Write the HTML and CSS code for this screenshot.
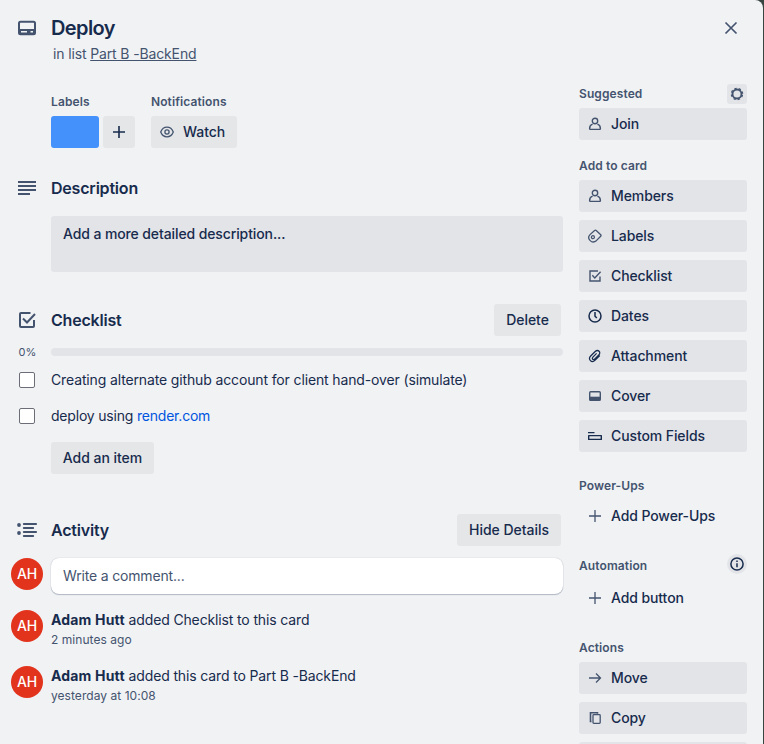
FILE: index.html
```
<!DOCTYPE html>
<html lang="en">
<head>
<meta charset="utf-8">
<title>Deploy</title>
<link rel="stylesheet" href="styles.css">
</head>
<body>
<svg class="sprite" aria-hidden="true">
  <symbol id="person" viewBox="0 0 16 16"><g fill="none" stroke="currentColor" stroke-width="1.4"><circle cx="8" cy="5" r="2.7"/><path d="M5.600 8.200C3.600 8.800 2.600 10.500 2.600 12.700c0 .5.200.7.700.7h9.400c.5 0 .7-.2.700-.7 0-2.200-1-3.900-3-4.500"/></g></symbol>
  <symbol id="plus" viewBox="0 0 16 16"><path d="M8 2v12M2 8h12" fill="none" stroke="currentColor" stroke-width="1.300"/></symbol>
  <symbol id="check" viewBox="0 0 16 16"><path d="M11 3H3v10h10V8.500M5.300 7.300l2.500 2.700 5.800-6.200" fill="none" stroke="currentColor" stroke-width="1.400"/></symbol>
</svg>
<div class="card">
  <button class="close" aria-label="Close"><svg width="14" height="14" viewBox="0 0 14 14"><path d="M1.500 1.500l11 11M12.500 1.500l-11 11" fill="none" stroke="currentColor" stroke-width="1.700"/></svg></button>
  <main class="main">
    <header class="row head">
      <div class="gutter"><svg width="20" height="16" viewBox="0 0 20 16"><rect x="2" y="1.800" width="16" height="12.400" rx="1.500" fill="none" stroke="currentColor" stroke-width="2"/><path d="M2 9h16v5H2z" fill="currentColor"/><path d="M4 11.700h6M13.500 11.700h2.500" stroke="#f1f2f4" stroke-width="1.400"/></svg></div>
      <h1>Deploy</h1>
    </header>
    <p class="sub">in list <a>Part B -BackEnd</a></p>

    <section class="details">
      <div><h3>Labels</h3><div class="chips"><span class="label"></span><button class="btn square"><svg width="14" height="14" viewBox="0 0 14 14"><path d="M7 1v12M1 7h12" stroke="currentColor" stroke-width="1.600"/></svg></button></div></div>
      <div><h3>Notifications</h3><button class="btn watch"><svg width="16" height="16" viewBox="0 0 16 16"><g fill="none" stroke="currentColor" stroke-width="1.300"><path d="M1.700 8C3 4.800 5.200 3.200 8 3.200S13 4.800 14.300 8C13 11.200 10.800 12.800 8 12.800S3 11.200 1.700 8z"/><circle cx="8" cy="8" r="2.100"/></g></svg><span>Watch</span></button></div>
    </section>

    <section class="row title-row description">
      <div class="gutter"><svg width="18" height="14" viewBox="0 0 18 14"><path d="M0 1h18M0 5h18M0 9h18M0 13h12" stroke="currentColor" stroke-width="2"/></svg></div>
      <h2>Description</h2>
    </section>
    <div class="desc-box">Add a more detailed description...</div>

    <section class="row title-row checklist">
      <div class="gutter"><svg width="18" height="18" viewBox="0 0 18 18"><path d="M12.500 2H3a1 1 0 0 0-1 1v12a1 1 0 0 0 1 1h12a1 1 0 0 0 1-1V9M5 7.500l4 4 8-8.500" fill="none" stroke="currentColor" stroke-width="2"/></svg></div>
      <h2>Checklist</h2><button class="btn delete">Delete</button>
    </section>
    <div class="row progress"><div class="gutter">0%</div><div class="track"></div></div>
    <div class="row item"><div class="gutter"><span class="box"></span></div><span>Creating alternate github account for client hand-over (simulate)</span></div>
    <div class="row item"><div class="gutter"><span class="box"></span></div><span class="tight">deploy using <a class="link">render.com</a></span></div>
    <button class="btn add-item">Add an item</button>

    <section class="row title-row activity">
      <div class="gutter"><svg width="20" height="16" viewBox="0 0 20 16"><g stroke="currentColor" stroke-width="1.900" stroke-linecap="round"><path d="M6.800 2h12.400M6.800 6h9.400M6.800 10h12.400M6.800 14h9.400"/></g><circle cx="2" cy="3" r="1.900" fill="currentColor"/><circle cx="2" cy="11" r="1.900" fill="currentColor"/></svg></div>
      <h2>Activity</h2><button class="btn hide">Hide Details</button>
    </section>
    <div class="row comment"><div class="avatar">AH</div><div class="input">Write a comment...</div></div>
    <div class="row entry first"><div class="avatar">AH</div><div><p><b>Adam Hutt</b> added Checklist to this card</p><p class="time">2 minutes ago</p></div></div>
    <div class="row entry"><div class="avatar">AH</div><div><p><b>Adam Hutt</b> added this card to Part B -BackEnd</p><p class="time">yesterday at 10:08</p></div></div>
  </main>

  <aside class="side">
    <div class="side-head suggested"><h3>Suggested</h3><button class="gear"><svg width="14" height="14" viewBox="0 0 14 14"><circle cx="7" cy="7" r="4.500" fill="none" stroke="currentColor" stroke-width="1.900"/><circle cx="7" cy="7" r="5.600" fill="none" stroke="currentColor" stroke-width="1.300" stroke-dasharray="2.300 2.098" stroke-dashoffset="-1.050"/></svg></button></div>
    <div class="stack"><button class="act"><svg><use href="#person"/></svg>Join</button></div>
    <div class="side-head add"><h3>Add to card</h3></div>
    <div class="stack">
      <button class="act"><svg><use href="#person"/></svg>Members</button>
      <button class="act"><svg viewBox="0 0 16 16"><g fill="none" stroke="currentColor" stroke-width="1.300"><path d="M7.600 2.500q.8-.7 1.600 0l4.500 4.300q.7.700 0 1.400l-4.100 4.200C7.500 14.300 4.800 14.200 3.200 12.600 1.300 10.700 1.300 8.300 3 6.600z"/><circle cx="5.900" cy="9.200" r="1.500"/></g></svg>Labels</button>
      <button class="act"><svg><use href="#check"/></svg>Checklist</button>
      <button class="act dark"><svg viewBox="0 0 16 16"><g fill="none" stroke="currentColor" stroke-width="1.500"><circle cx="8" cy="8" r="6"/><path d="M8 4v4.200l1.800 1.900"/></g></svg>Dates</button>
      <button class="act dark"><svg viewBox="0 0 16 16"><path d="M12.800 7.500 8.200 12.100C6.600 13.700 4.600 13.800 3.400 12.600s-1.100-3.200.5-4.800l4.300-4.300c1.200-1.200 2.900-1.300 3.900-.3s.9 2.600-.3 3.800l-4 4c-.7.700-1.600.7-2.100.2s-.5-1.400.2-2.100l3.700-3.700" fill="none" stroke="currentColor" stroke-width="1.250"/></svg>Attachment</button>
      <button class="act"><svg viewBox="0 0 16 16"><rect x="2.700" y="3.700" width="10.600" height="8.600" rx="1" fill="none" stroke="currentColor" stroke-width="1.400"/><path d="M2.500 8.700h11v3.800h-11z" fill="currentColor"/></svg>Cover</button>
      <button class="act dark"><svg viewBox="0 0 16 16"><path d="M1 4.600h6.500M1.700 7.600h12.600v3.800H1.700z" fill="none" stroke="currentColor" stroke-width="1.400" stroke-linejoin="round"/></svg>Custom Fields</button>
    </div>
    <div class="side-head power"><h3>Power-Ups</h3></div>
    <button class="act ghost"><svg><use href="#plus"/></svg>Add Power-Ups</button>
    <div class="side-head auto"><h3>Automation</h3><span class="info"><svg width="14" height="14" viewBox="0 0 14 14"><circle cx="7" cy="7" r="6.100" fill="none" stroke="currentColor" stroke-width="1.500"/><path d="M7 6.200v4M7 3.500v1.600" stroke="currentColor" stroke-width="1.500"/></svg></span></div>
    <button class="act ghost"><svg><use href="#plus"/></svg>Add button</button>
    <div class="side-head actions"><h3>Actions</h3></div>
    <div class="stack">
      <button class="act"><svg viewBox="0 0 16 16"><path d="M2 8h11.500M9 3.500 13.500 8 9 12.500" fill="none" stroke="currentColor" stroke-width="1.300"/></svg>Move</button>
      <button class="act"><svg viewBox="0 0 16 16"><path d="M4.500 11.500H3.500V2.700h7v1" fill="none" stroke="currentColor" stroke-width="1.600"/><rect x="6" y="4.600" width="7.200" height="8.800" rx=".8" fill="none" stroke="currentColor" stroke-width="1.300"/></svg>Copy</button>
      <button class="act" aria-label="More"></button>
    </div>
  </aside>
</div>
</body>
</html>
```
FILE: styles.css
```
* { box-sizing: border-box; margin: 0; padding: 0; }
body { width: 764px; height: 744px; overflow: hidden; background: #38443f; font: 400 14px/20px Inter, "Liberation Sans", sans-serif; letter-spacing: -.137px; color: #172b4d; }
button { border: 0; background: none; font: inherit; color: inherit; text-align: left; }
.sprite { display: none; }
.card { position: relative; display: grid; grid-template-columns: 563px 168px; column-gap: 16px; width: 763px; height: 744px; overflow: hidden; background: #f1f2f4; border-top-right-radius: 8px; }
.close { position: absolute; left: 724px; top: 21px; width: 14px; height: 14px; color: #44546f; }
.close svg { display: block; }
.row { display: flex; }
.gutter { flex: 0 0 51px; display: flex; align-items: center; padding-left: 18px; color: #44546f; }
h1 { font-size: 20px; line-height: 24px; font-weight: 600; letter-spacing: -.6px; }
h2 { font-size: 16px; line-height: 20px; font-weight: 600; flex: 1; letter-spacing: -.2px; }
h3 { font-size: 12px; line-height: 20px; font-weight: 600; letter-spacing: .1px; color: #44546f; }
.head { padding-top: 16px; height: 40px; }
.head .gutter { padding-left: 17px; }
.sub { margin: 4px 0 0 53px; color: #44546f; }
.sub a { text-decoration: underline; }
.details { display: flex; gap: 16px; margin: 28px 0 0 51px; }
.details h3 { height: 24px; }
.chips { display: flex; gap: 4px; }
.label { width: 48px; height: 32px; border-radius: 3px; background: #4591fb; }
.btn { display: flex; align-items: center; justify-content: center; height: 32px; border-radius: 3px; background: #e4e6e8; font-weight: 500; letter-spacing: -.03px; white-space: nowrap; }
.square { width: 32px; }
.watch { width: 86px; gap: 8px; justify-content: flex-start; padding-left: 8px; }
.watch svg { color: #44546f; }
.title-row { align-items: center; height: 32px; }
.description { margin-top: 24px; }
.desc-box { margin: 12px 0 0 51px; height: 56px; padding: 8px 12px; border-radius: 3px; background: #e3e4e8; font-weight: 500; letter-spacing: -.11px; }
.checklist { margin-top: 32px; }
.delete { width: 67px; margin-right: 2px; }
.progress { height: 24px; margin-top: 4px; align-items: center; }
.progress .gutter { font-size: 11px; letter-spacing: 0; padding-left: 18.500px; }
.track { flex: 1; height: 8px; border-radius: 4px; background: #e3e4e8; }
.item { height: 36px; padding-top: 6px; align-items: flex-start; }
.item .gutter { padding-left: 19px; height: 20px; }
.tight { letter-spacing: -.2px; }
.box { width: 16px; height: 16px; border: 1px solid #6b6e76; border-radius: 2px; background: #fff; }
.link { color: #0055e0; }
.add-item { width: 103px; margin: 6px 0 0 51px; }
.activity { margin-top: 40px; }
.activity .gutter { padding-left: 17px; }
.hide { width: 104px; margin-right: 2px; }
.comment { margin-top: 12px; height: 36px; }
.avatar { flex: 0 0 32px; height: 32px; margin: 0 8px 0 11px; border-radius: 50%; background: #e2341d; color: #fff; font-weight: 500; line-height: 32px; text-align: center; }
.input { flex: 1; padding: 8px 12px; border-radius: 8px; background: #fff; color: #44546f; letter-spacing: -.17px; box-shadow: 0 1px 1px #091e4240, 0 0 1px #091e424f; }
.entry { height: 56px; }
.first { margin-top: 16px; }
.entry b { font-weight: 700; letter-spacing: .18px; }
.time { font-size: 12px; line-height: 20px; letter-spacing: .05px; color: #44546f; }
.side-head { display: flex; justify-content: space-between; align-items: center; height: 20px; }
.suggested { margin-top: 84px; }
.gear, .info { width: 20px; height: 20px; display: grid; place-items: center; border-radius: 3px; background: #e3e4e8; color: #44546f; }
.info { border-radius: 50%; color: #172b4d; position: relative; top: -2px; }
.stack { display: flex; flex-direction: column; gap: 8px; margin-top: 4px; }
.act { display: flex; align-items: center; gap: 8px; width: 168px; height: 32px; flex: none; padding-left: 8px; border-radius: 3px; background: #e3e4e8; font-weight: 500; letter-spacing: -.1px; white-space: nowrap; }
.act svg { width: 16px; height: 16px; color: #44546f; }
.act.dark svg { color: #172b4d; }
.ghost { background: none; }
.add { margin-top: 16px; }
.power { margin-top: 24px; height: 20px; margin-bottom: 4px; }
.auto { margin-top: 24px; margin-bottom: 6px; }
.actions { margin-top: 24px; }
```
